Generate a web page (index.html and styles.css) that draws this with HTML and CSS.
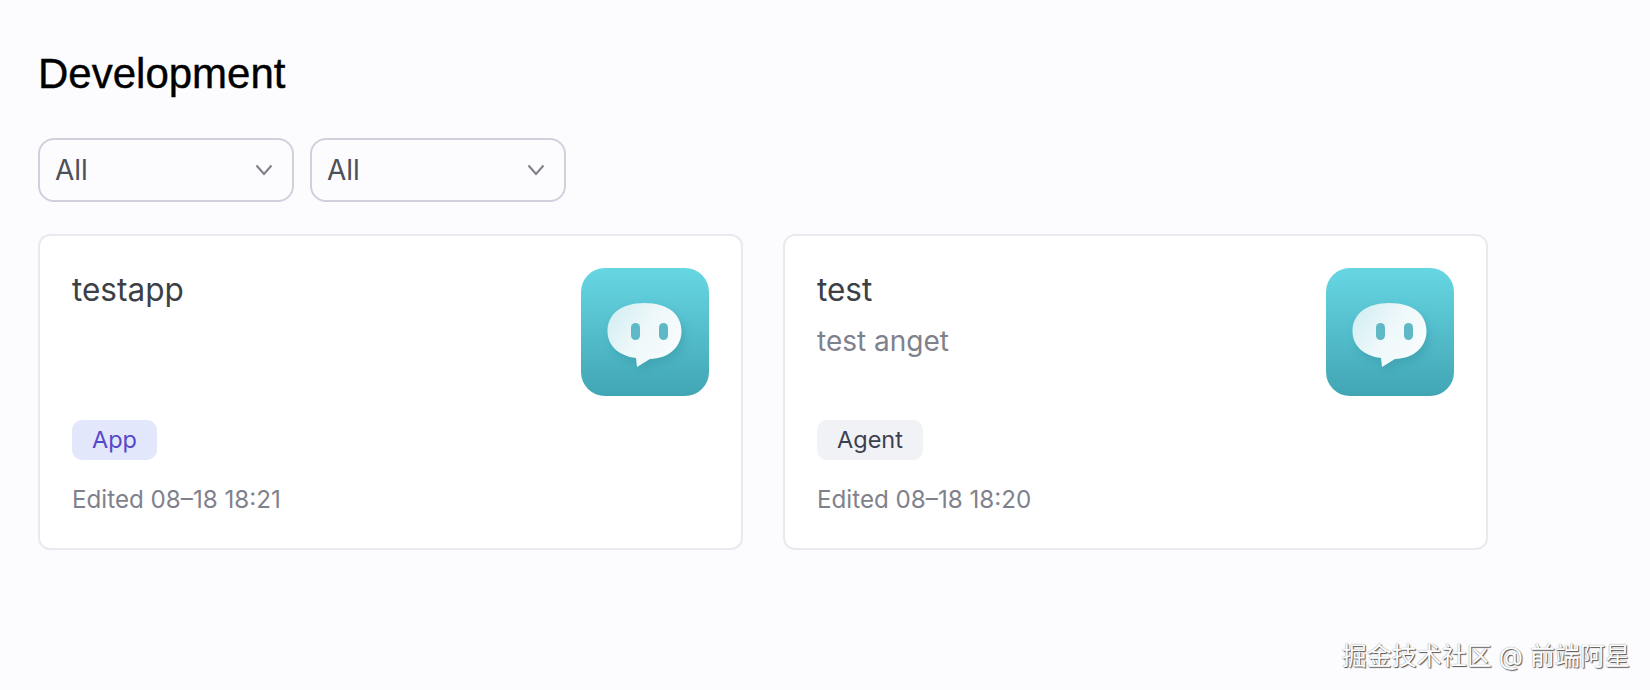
FILE: index.html
```html
<!DOCTYPE html>
<html lang="en">
<head>
    <meta charset="UTF-8">
    <title>Development</title>
    <link rel="stylesheet" href="styles.css">
</head>
<body>
    <!-- shared app icon -->
    <svg class="icon-defs" width="0" height="0">
        <defs>
            <linearGradient id="iconBg" x1="0" y1="0" x2="0" y2="1">
                <stop offset="0" stop-color="#67d6e3"></stop>
                <stop offset="1" stop-color="#41a5b4"></stop>
            </linearGradient>
            <linearGradient id="bubbleBg" x1="0" y1="0" x2="1" y2="0.6">
                <stop offset="0" stop-color="#cfecf1"></stop>
                <stop offset="0.55" stop-color="#eef8fa"></stop>
                <stop offset="1" stop-color="#f8fcfd"></stop>
            </linearGradient>
            <filter id="bubbleBlur" x="-20%" y="-20%" width="140%" height="140%">
                <feGaussianBlur stdDeviation="4"></feGaussianBlur>
            </filter>
            <symbol id="appIcon" viewBox="0 0 128 128">
                <rect width="128" height="128" rx="24" fill="url(#iconBg)"></rect>
                <path class="bubble-shadow" d="M63.5 35C88 35 100.500 47 100.500 63 100.500 79 88 90.500 69 91L56 99 55 90C38 88 26.500 78 26.500 63 26.500 47 39 35 63.500 35Z" filter="url(#bubbleBlur)" transform="translate(3 5)"></path>
                <path d="M63.5 35C88 35 100.500 47 100.500 63 100.500 79 88 90.500 69 91L56 99 55 90C38 88 26.500 78 26.500 63 26.500 47 39 35 63.500 35Z" fill="url(#bubbleBg)"></path>
                <rect x="50" y="55" width="9" height="17" rx="4.500" fill="#5fb8c5"></rect>
                <rect x="78" y="55" width="9" height="17" rx="4.500" fill="#5fb8c5"></rect>
            </symbol>
        </defs>
    </svg>

    <h1 class="page-title">Development</h1>

    <div class="filters">
        <div class="select">
            <span>All</span>
            <svg class="chevron" width="18" height="12" viewBox="0 0 18 12"><path d="M1.500 1.500 9 10l7.500-8.500"></path></svg>
        </div>
        <div class="select">
            <span>All</span>
            <svg class="chevron" width="18" height="12" viewBox="0 0 18 12"><path d="M1.500 1.500 9 10l7.500-8.500"></path></svg>
        </div>
    </div>

    <div class="card-list">
        <div class="card">
            <div class="card-top">
                <div class="card-text">
                    <div class="card-name">testapp</div>
                </div>
                <svg class="app-icon"><use href="#appIcon"></use></svg>
            </div>
            <span class="tag tag-app">App</span>
            <div class="card-edited">Edited 08–18 18:21</div>
        </div>

        <div class="card">
            <div class="card-top">
                <div class="card-text">
                    <div class="card-name">test</div>
                    <div class="card-desc">test anget</div>
                </div>
                <svg class="app-icon"><use href="#appIcon"></use></svg>
            </div>
            <span class="tag tag-agent">Agent</span>
            <div class="card-edited">Edited 08–18 18:20</div>
        </div>
    </div>

    <div class="watermark">掘金技术社区 @ 前端阿星</div>
</body>
</html>
```

FILE: styles.css
```css
body {
    margin: 0;
    height: 690px;
    padding: 50px 0 0 38px;
    box-sizing: border-box;
    overflow: hidden;
    background-color: #fcfcff;
    font-family: Inter, "Noto Sans CJK SC", sans-serif;
}

.icon-defs {
    display: block;
}

.page-title {
    margin: 0;
    font-family: "Liberation Sans", sans-serif;
    font-size: 42px;
    line-height: 48px;
    font-weight: 400;
    color: #000;
    -webkit-text-stroke: 0.4px #000;
}

.filters {
    display: flex;
    gap: 16px;
    margin-top: 40px;
}

.select {
    width: 256px;
    height: 64px;
    box-sizing: border-box;
    padding: 0 19px 0 15px;
    display: flex;
    align-items: center;
    justify-content: space-between;
    border: 2px solid #d0d0dc;
    border-radius: 16px;
    font-size: 28px;
    color: #4d4f59;
}

.chevron path {
    fill: none;
    stroke: #7d7f88;
    stroke-width: 2;
}

.card-list {
    display: flex;
    gap: 40px;
    margin-top: 32px;
}

.card {
    width: 705px;
    height: 316px;
    box-sizing: border-box;
    padding: 32px 32px;
    background-color: #fff;
    border: 2px solid #e9e9f0;
    border-radius: 12px;
}

.card-top {
    display: flex;
    justify-content: space-between;
    height: 152px;
}

.card-name {
    margin-top: 2px;
    font-size: 31.500px;
    line-height: 40px;
    color: #3d3f47;
}

.card-desc {
    margin-top: 11px;
    font-size: 28px;
    line-height: 40px;
    color: #7f828c;
}

.app-icon {
    width: 128px;
    height: 128px;
}

.bubble-shadow {
    fill: #2f8a9a;
    opacity: 0.35;
}

.tag {
    display: inline-block;
    height: 40px;
    padding: 0 20px;
    border-radius: 10px;
    font-size: 23.500px;
    line-height: 40px;
}

.tag-app {
    background-color: #e3e7fb;
    color: #5549c9;
}

.tag-agent {
    background-color: #f1f2f6;
    color: #3d3f4e;
}

.card-edited {
    margin-top: 22px;
    font-size: 24.200px;
    line-height: 36px;
    color: #7f828c;
}

.watermark {
    position: absolute;
    right: 20px;
    bottom: 18px;
    font-size: 25px;
    line-height: 32px;
    color: #fff;
    text-shadow: 1px 1px 1px #555, 0 0 1px #777;
}
```
